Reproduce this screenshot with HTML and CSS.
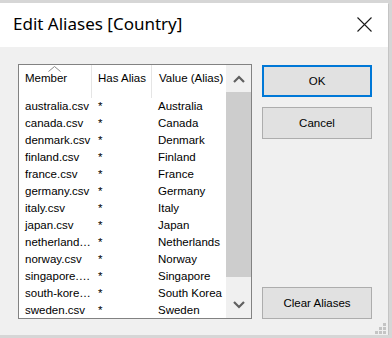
FILE: index.html
```html
<!DOCTYPE html>
<html lang="en">
<head>
  <meta charset="UTF-8">
  <meta name="viewport" content="width=device-width, initial-scale=1.0">
  <title>Edit Aliases [Country]</title>
  <link rel="stylesheet" href="styles.css">
</head>
<body>
  <div class="dialog">
    <div class="title-bar">
      <span class="title">Edit Aliases [Country]</span>
      <svg class="close" width="15" height="15" viewBox="0 0 15 15">
        <path d="M0.5 0.5 L14.5 14.5 M14.5 0.5 L0.5 14.5" stroke="#1a1a1a" stroke-width="1.1" fill="none"/>
      </svg>
    </div>

    <div class="content">
      <div class="list">
        <div class="table">
          <div class="list-header">
            <div class="col col-member">
              Member
              <svg class="sort" width="13" height="6" viewBox="0 0 13 6">
                <polyline points="0.5,5.5 6.5,0.5 12.5,5.5" stroke="#8a8a8a" stroke-width="1" fill="none"/>
              </svg>
            </div>
            <div class="col col-has">Has Alias</div>
            <div class="col col-value">Value (Alias)</div>
          </div>
          <div id="rows" class="rows"></div>
        </div>
        <div class="scrollbar">
          <div class="arrow">
            <svg width="12" height="8" viewBox="0 0 12 8">
              <polyline points="1,7 6,2 11,7" stroke="#606060" stroke-width="2.2" fill="none"/>
            </svg>
          </div>
          <div class="thumb"></div>
          <div class="track"></div>
          <div class="arrow">
            <svg width="12" height="8" viewBox="0 0 12 8">
              <polyline points="1,1 6,6 11,1" stroke="#606060" stroke-width="2.2" fill="none"/>
            </svg>
          </div>
        </div>
      </div>

      <div class="buttons">
        <button class="btn btn-default">OK</button>
        <button class="btn">Cancel</button>
        <button class="btn btn-clear">Clear Aliases</button>
      </div>
    </div>

    <svg class="grip" width="11" height="11" viewBox="0 0 11 11">
      <rect x="8" y="0" width="3" height="3" fill="#c4c4c4"/>
      <rect x="4" y="4" width="3" height="3" fill="#c4c4c4"/>
      <rect x="8" y="4" width="3" height="3" fill="#c4c4c4"/>
      <rect x="0" y="8" width="3" height="3" fill="#c4c4c4"/>
      <rect x="4" y="8" width="3" height="3" fill="#c4c4c4"/>
      <rect x="8" y="8" width="3" height="3" fill="#c4c4c4"/>
    </svg>
  </div>

  <script>
    const MEMBERS = [
      ["australia.csv", "Australia"],
      ["canada.csv", "Canada"],
      ["denmark.csv", "Denmark"],
      ["finland.csv", "Finland"],
      ["france.csv", "France"],
      ["germany.csv", "Germany"],
      ["italy.csv", "Italy"],
      ["japan.csv", "Japan"],
      ["netherland…", "Netherlands"],
      ["norway.csv", "Norway"],
      ["singapore.…", "Singapore"],
      ["south-kore…", "South Korea"],
      ["sweden.csv", "Sweden"]
    ];

    const rowsEl = document.getElementById("rows");
    MEMBERS.forEach(([member, value]) => {
      const row = document.createElement("div");
      row.className = "row";
      row.innerHTML = `
        <div class="col col-member">${member}</div>
        <div class="col col-has">*</div>
        <div class="col col-value">${value}</div>
      `;
      rowsEl.appendChild(row);
    });
  </script>
</body>
</html>
```

FILE: styles.css
```css
:root {
  --dialog-bg: #f0f0f0;
  --outside: #d6d6d6;
  --border: #828282;
  --btn-bg: #e1e1e1;
  --btn-border: #adadad;
  --accent: #0078d7;
  --thumb: #cdcdcd;
}

body {
  margin: 0;
  background: var(--outside);
  font-family: "Liberation Sans", Arial, sans-serif;
  color: #000;
}

.dialog {
  position: relative;
  width: 388px;
  height: 332px;
  margin-top: 3px;
  background: var(--dialog-bg);
  box-shadow: 1px 1px 0 #c4c4c4;
}

.title-bar {
  height: 44px;
  background: #fff;
  display: flex;
  align-items: center;
  justify-content: space-between;
  padding: 0 16px 0 13px;
}

.title {
  font-family: "Noto Sans", Arial, sans-serif;
  font-size: 17px;
  margin-top: -3px;
  color: #000;
}

.close {
  margin-top: -1px;
}

.content {
  display: flex;
  gap: 10px;
  padding: 17px 0 0 18px;
}

.list {
  width: 232px;
  height: 253px;
  border: 1px solid var(--border);
  background: #fff;
  display: flex;
  font-size: 11.5px;
}

.table {
  width: 207px;
  overflow: hidden;
}

.list-header, .row {
  display: grid;
  grid-template-columns: 73px 60px 74px;
}

.list-header {
  height: 33px;
}

.list-header .col {
  position: relative;
  padding-top: 6px;
  line-height: 14px;
  border-right: 1px solid #e5e5e5;
  height: 27px;
}

.list-header .col-value {
  border-right: none;
}

.sort {
  position: absolute;
  left: 29px;
  top: 1px;
}

.col {
  white-space: nowrap;
  overflow: hidden;
}

.col-member {
  padding-left: 6px;
}

.col-has {
  padding-left: 6px;
}

.col-value {
  padding-left: 6px;
}

.list-header .col-value {
  padding-left: 7px;
}

.row {
  height: 17px;
  line-height: 17px;
}

.scrollbar {
  width: 25px;
  background: var(--dialog-bg);
  display: flex;
  flex-direction: column;
}

.arrow {
  height: 27px;
  display: flex;
  align-items: center;
  justify-content: center;
}

.arrow:last-child {
  height: 26px;
}

.thumb {
  height: 185px;
  background: var(--thumb);
}

.track {
  flex: 1;
}

.buttons {
  width: 110px;
  height: 254px;
  padding-top: 1px;
  display: flex;
  flex-direction: column;
  gap: 10px;
}

.btn {
  height: 32px;
  background: var(--btn-bg);
  border: 1px solid var(--btn-border);
  font-family: inherit;
  font-size: 11.5px;
  color: #000;
  padding: 0;
}

.btn-default {
  border: 2px solid var(--accent);
}

.btn-clear {
  margin-top: auto;
}

.grip {
  position: absolute;
  right: 2px;
  bottom: 1px;
}
```
